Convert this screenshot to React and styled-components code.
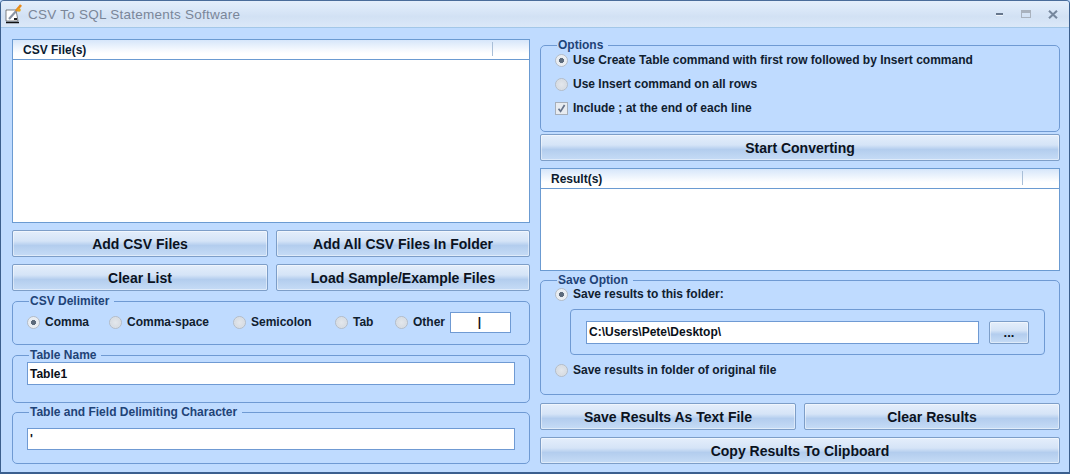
import React from "react";
import styled, { createGlobalStyle } from "styled-components";

const GlobalStyle = createGlobalStyle`
  html, body { margin: 0; padding: 0; background: #bfdbff; }
  body { font-family: "Liberation Sans", Arial, sans-serif; }
`;

const Window = styled.div`
  width: 1070px;
  height: 474px;
  box-sizing: border-box;
  display: flex;
  flex-direction: column;
  overflow: hidden;
  background: #bfdbff;
  border: 1px solid #3b5f8e;
  border-top: 1px solid #4a6c9a;
  border-bottom: 2px solid #3b5f8e;
  border-radius: 4px 4px 0 0;
`;

const TitleBar = styled.div`
  height: 27px;
  flex: none;
  display: flex;
  align-items: center;
  padding: 0 7px 0 4px;
  box-sizing: border-box;
  background: linear-gradient(#e4eefb 0, #dbe8f8 30%, #d2e1f4 60%, #dbe8f8 100%);
  border-bottom: 1px solid #a3c7e8;
`;

const TitleText = styled.div`
  margin-left: 5px;
  font-size: 13.5px;
  letter-spacing: 0.25px;
  color: #7a8699;
`;

const WinControls = styled.div`
  margin-left: auto;
  display: flex;
  align-items: center;
  gap: 17px;
  padding-right: 4px;
`;

const Body = styled.div`
  flex: 1;
  display: grid;
  grid-template-columns: 518px 520px;
  column-gap: 10px;
  padding: 11px 10px 0 11px;
  border-left: 3px solid #c4d8ef;
  margin-left: -3px;
`;

const Column = styled.div`
  display: flex;
  flex-direction: column;
`;

const ListBox = styled.div`
  height: ${(p) => p.$h}px;
  box-sizing: border-box;
  border: 1px solid #6b9bd2;
  background: #fff;
  flex: none;
`;

const ListHeader = styled.div`
  height: 20px;
  box-sizing: border-box;
  display: flex;
  align-items: center;
  padding-left: 10px;
  position: relative;
  font-size: 12px;
  font-weight: 700;
  color: #0b1a2e;
  background: linear-gradient(#d6e6fa, #ffffff 70%);
  border-bottom: 1px solid #6b9bd2;
`;

const HeaderDivider = styled.span`
  position: absolute;
  left: ${(p) => p.$x}px;
  top: 2px;
  bottom: 3px;
  width: 1px;
  background: #a9bfd8;
`;

const Button = styled.button`
  flex: ${(p) => (p.$grow ? "1" : "none")};
  width: ${(p) => (p.$w ? `${p.$w}px` : "auto")};
  height: 27px;
  padding: 0;
  box-sizing: border-box;
  border: 1px solid #7d9ec8;
  border-radius: 2px;
  font-family: inherit;
  font-size: 14px;
  font-weight: 700;
  color: #0b1220;
  background: linear-gradient(#e4eefb 0, #d5e4f7 40%, #b3cdee 58%, #c6dcf6 100%);
  box-shadow: inset 0 0 0 1px rgba(255, 255, 255, 0.45);
`;

const ButtonRow = styled.div`
  display: flex;
  gap: 8px;
  margin-top: ${(p) => p.$mt}px;
`;

const Group = styled.fieldset`
  margin: ${(p) => p.$mt || 0}px 0 0;
  padding: ${(p) => p.$pad || "0 14px"};
  height: ${(p) => p.$h}px;
  box-sizing: border-box;
  border: 1px solid #6f9ad3;
  border-radius: 5px;
  min-width: 0;
  flex: none;
`;

const Legend = styled.legend`
  margin-left: 2px;
  padding: 0 5px 0 1px;
  font-size: 12px;
  font-weight: 700;
  color: #1f4377;
  line-height: 13px;
`;

const Choice = styled.label`
  display: flex;
  align-items: center;
  gap: 5px;
  font-size: 12px;
  font-weight: 700;
  color: #10202f;
  line-height: 14px;
  height: ${(p) => p.$h || 14}px;
`;

const RadioDot = styled.span`
  width: 11px;
  height: 11px;
  border-radius: 50%;
  flex: none;
  border: 1px solid #b4bcc6;
  background: radial-gradient(circle at 50% 50%, ${(p) =>
    p.$on ? "#5d6b7c 0, #5d6b7c 30%, #e6ebf1 36%, #f0f3f6 100%" : "#e3e7ec 0, #d8dde3 60%, #eef1f4 100%"});
`;

const CheckBox = styled.span`
  width: 11px;
  height: 11px;
  flex: none;
  display: flex;
  align-items: center;
  justify-content: center;
  border: 1px solid #a7afba;
  background: #e8ecf1;
`;

const DelimiterRow = styled.div`
  display: flex;
  align-items: center;
  height: 26px;
  margin-top: 1px;
`;

const DelimiterChoice = styled(Choice)`
  width: ${(p) => p.$w}px;
  flex: none;
`;

const TextField = styled.div`
  box-sizing: border-box;
  height: ${(p) => p.$h || 23}px;
  width: ${(p) => (p.$w ? `${p.$w}px` : "auto")};
  flex: ${(p) => (p.$w ? "none" : "1")};
  display: flex;
  align-items: center;
  justify-content: ${(p) => (p.$center ? "center" : "flex-start")};
  padding: 0 2px 0 ${(p) => (p.$center ? 0 : 2)}px;
  background: #fff;
  border: 1px solid #6f9ad3;
  font-size: 12px;
  font-weight: 700;
  color: #0a0f18;
`;

const OptionStack = styled.div`
  display: flex;
  flex-direction: column;
  gap: 10px;
  padding-top: 1px;
`;

const FolderBox = styled.div`
  margin: 8px 0 8px 15px;
  height: 46px;
  box-sizing: border-box;
  padding: 0 15px;
  display: flex;
  align-items: center;
  gap: 10px;
  border: 1px solid #6f9ad3;
  border-radius: 4px;
`;

const BrowseButton = styled(Button)`
  width: 40px;
  height: 23px;
  font-size: 13px;
`;

const Logo = () => (
  <svg width="18" height="20" viewBox="0 0 18 20">
    <path d="M1 17 L1 6 L11 6 L13 17 Z" fill="#fff" stroke="#333" strokeWidth="0.6" />
    <path d="M1 18.5 H14" stroke="#111" strokeWidth="1.4" />
    <path d="M4 15 L13 5" stroke="#8a94a3" strokeWidth="2.2" />
    <path d="M11 7 L16 1" stroke="#e8891c" strokeWidth="2.6" />
    <circle cx="14" cy="6" r="1.8" fill="#e5a81f" />
    <path d="M9 14 h3 v2 h-3z" fill="#222" />
  </svg>
);

const MinIcon = () => (
  <svg width="8" height="6" viewBox="0 0 8 6">
    <rect x="0" y="2" width="7" height="2" fill="#66768c" />
    <rect x="0" y="4" width="7" height="1" fill="#f0f5fb" />
  </svg>
);

const MaxIcon = () => (
  <svg width="10" height="9" viewBox="0 0 10 9">
    <rect x="0.5" y="0.5" width="9" height="7" fill="none" stroke="#a9b2be" />
    <rect x="0" y="1" width="10" height="2" fill="#a9b2be" />
  </svg>
);

const CloseIcon = () => (
  <svg width="10" height="9" viewBox="0 0 10 9">
    <path d="M1 0.8 L9 8.2 M9 0.8 L1 8.2" stroke="#76879d" strokeWidth="2.1" />
  </svg>
);

const Tick = () => (
  <svg width="9" height="9" viewBox="0 0 9 9">
    <path d="M1.5 4.8 L3.6 7.4 L7.6 1" fill="none" stroke="#66738a" strokeWidth="1.7" />
  </svg>
);

const delimiters = [
  { label: "Comma", w: 82, on: true },
  { label: "Comma-space", w: 124 },
  { label: "Semicolon", w: 102 },
  { label: "Tab", w: 60 },
  { label: "Other", w: 55 },
];

export default function App() {
  return (
    <Window>
      <GlobalStyle />
      <TitleBar>
        <Logo />
        <TitleText>CSV To SQL Statements Software</TitleText>
        <WinControls>
          <MinIcon />
          <MaxIcon />
          <CloseIcon />
        </WinControls>
      </TitleBar>
      <Body>
        <Column>
          <ListBox $h={184}>
            <ListHeader>
              CSV File(s)
              <HeaderDivider $x={479} />
            </ListHeader>
          </ListBox>
          <ButtonRow $mt={7}>
            <Button $w={256}>Add CSV Files</Button>
            <Button $grow>Add All CSV Files In Folder</Button>
          </ButtonRow>
          <ButtonRow $mt={7}>
            <Button $w={256}>Clear List</Button>
            <Button $grow>Load Sample/Example Files</Button>
          </ButtonRow>
          <Group $mt={4} $h={50}>
            <Legend>CSV Delimiter</Legend>
            <DelimiterRow>
              {delimiters.map((d) => (
                <DelimiterChoice key={d.label} $w={d.w}>
                  <RadioDot $on={d.on} />
                  {d.label}
                </DelimiterChoice>
              ))}
              <TextField $w={61} $h={21} $center>
                |
              </TextField>
            </DelimiterRow>
          </Group>
          <Group $mt={4} $h={54}>
            <Legend>Table Name</Legend>
            <TextField $h={23}>Table1</TextField>
          </Group>
          <Group $mt={3} $h={58}>
            <Legend>Table and Field Delimiting Character</Legend>
            <TextField $h={22} style={{ marginTop: 9 }}>'</TextField>
          </Group>
        </Column>
        <Column>
          <Group $h={93} $pad="0 14px">
            <Legend>Options</Legend>
            <OptionStack>
              <Choice>
                <RadioDot $on />
                Use Create Table command with first row followed by Insert command
              </Choice>
              <Choice>
                <RadioDot />
                Use Insert command on all rows
              </Choice>
              <Choice>
                <CheckBox>
                  <Tick />
                </CheckBox>
                Include ; at the end of each line
              </Choice>
            </OptionStack>
          </Group>
          <ButtonRow $mt={2}>
            <Button $grow>Start Converting</Button>
          </ButtonRow>
          <ListBox $h={103} style={{ marginTop: 7 }}>
            <ListHeader>
              Result(s)
              <HeaderDivider $x={481} />
            </ListHeader>
          </ListBox>
          <Group $mt={3} $h={121} $pad="0 14px">
            <Legend>Save Option</Legend>
            <Choice>
              <RadioDot $on />
              Save results to this folder:
            </Choice>
            <FolderBox>
              <TextField>C:\Users\Pete\Desktop\</TextField>
              <BrowseButton>...</BrowseButton>
            </FolderBox>
            <Choice>
              <RadioDot />
              Save results in folder of original file
            </Choice>
          </Group>
          <ButtonRow $mt={8}>
            <Button $w={256}>Save Results As Text File</Button>
            <Button $grow>Clear Results</Button>
          </ButtonRow>
          <ButtonRow $mt={7}>
            <Button $grow>Copy Results To Clipboard</Button>
          </ButtonRow>
        </Column>
      </Body>
    </Window>
  );
}
